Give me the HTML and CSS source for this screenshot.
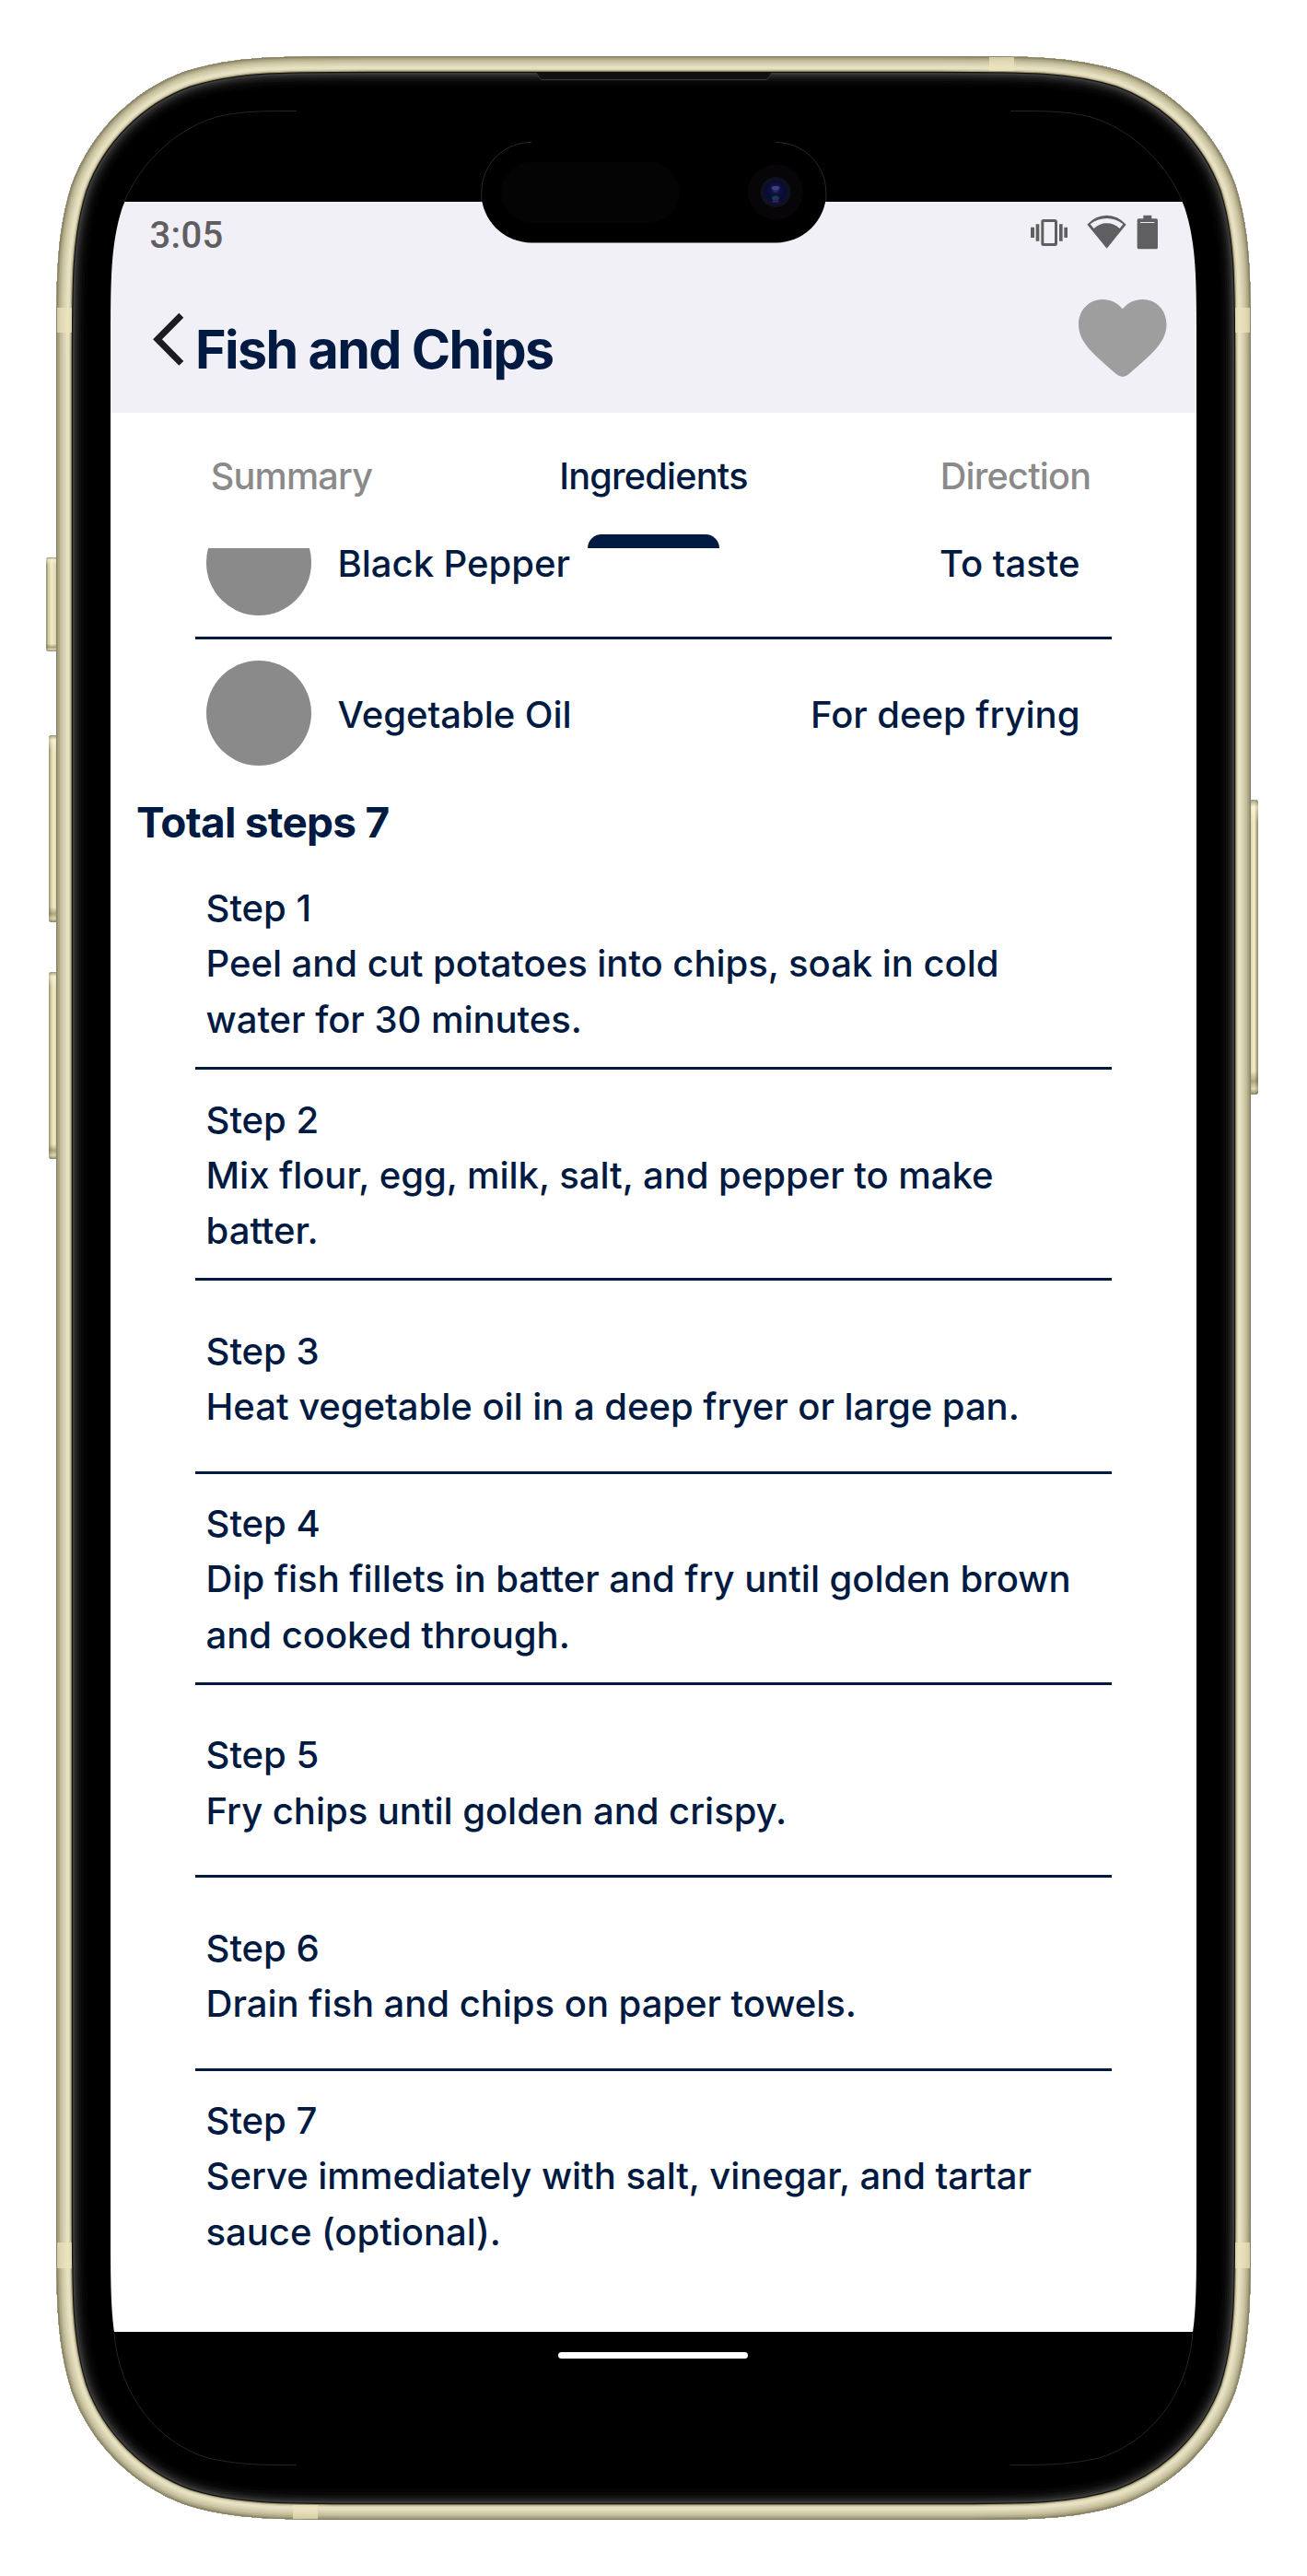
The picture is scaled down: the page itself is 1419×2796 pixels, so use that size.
FILE: index.html
```html
<!DOCTYPE html>
<html lang="en">
<head>
<meta charset="utf-8">
<title>Fish and Chips</title>
<link rel="stylesheet" href="styles.css">
</head>
<body>
<main class="stage">
  <svg class="frame" viewBox="0 0 1419 2796" aria-hidden="true">
    <defs>
      <linearGradient id="btnL" x1="0" x2="1" y1="0" y2="0">
        <stop offset="0" stop-color="#8f8865"/><stop offset=".18" stop-color="#cfc8a0"/><stop offset=".42" stop-color="#f1ebc9"/><stop offset=".8" stop-color="#dad4ae"/><stop offset="1" stop-color="#968f6c"/>
      </linearGradient>
      <linearGradient id="btnR" x1="1" x2="0" y1="0" y2="0">
        <stop offset="0" stop-color="#8f8865"/><stop offset=".15" stop-color="#b5ae88"/><stop offset=".35" stop-color="#f6f0cd"/><stop offset=".7" stop-color="#dad4ae"/><stop offset="1" stop-color="#a69f7c"/>
      </linearGradient>
      <linearGradient id="btnShade" x1="0" x2="0" y1="0" y2="1">
        <stop offset="0" stop-color="#7d7654" stop-opacity=".7"/><stop offset=".025" stop-color="#fffbe0" stop-opacity=".5"/><stop offset=".08" stop-color="#fffbe0" stop-opacity="0"/><stop offset=".92" stop-color="#6d6645" stop-opacity="0"/><stop offset=".955" stop-color="#6d6645" stop-opacity=".5"/><stop offset=".98" stop-color="#cfc8a0" stop-opacity=".5"/><stop offset="1" stop-color="#5d5636" stop-opacity=".7"/>
      </linearGradient>
      <path id="shell" d="M0 339.4C0 241.6 0 192.8 16.6 140.2C37.5 82.8 82.8 37.5 140.2 16.6C192.8 0 241.6 0 339.4 0H957.6C1055.4 0 1104.2 0 1156.8 16.6C1214.2 37.5 1259.5 82.8 1280.4 140.2C1297 192.8 1297 241.6 1297 339.4V2334.6C1297 2432.4 1297 2481.2 1280.4 2533.8C1259.5 2591.2 1214.2 2636.5 1156.8 2657.4C1104.2 2674 1055.4 2674 957.6 2674H339.4C241.6 2674 192.8 2674 140.2 2657.4C82.8 2636.5 37.5 2591.2 16.6 2533.8C0 2481.2 0 2432.4 0 2334.6Z"/>
      <clipPath id="shellClip"><use href="#shell"/></clipPath>
    </defs>
    <g>
      <rect x="50" y="605" width="14" height="102" rx="3" fill="url(#btnL)"/>
      <rect x="50" y="605" width="14" height="102" rx="3" fill="url(#btnShade)"/>
      <rect x="53" y="798" width="12" height="203" rx="3" fill="url(#btnL)"/>
      <rect x="53" y="798" width="12" height="203" rx="3" fill="url(#btnShade)"/>
      <rect x="53" y="1055" width="12" height="203" rx="3" fill="url(#btnL)"/>
      <rect x="53" y="1055" width="12" height="203" rx="3" fill="url(#btnShade)"/>
      <rect x="1354" y="868" width="12" height="320" rx="3" fill="url(#btnR)"/>
      <rect x="1354" y="868" width="12" height="320" rx="3" fill="url(#btnShade)"/>
    </g>
    <g transform="translate(61 61)">
      <use href="#shell"/>
      <g clip-path="url(#shellClip)" fill="none">
        <use href="#shell" stroke="#030303" stroke-width="66"/>
        <use href="#shell" stroke="#080808" stroke-width="60"/>
        <use href="#shell" stroke="#0f0f0f" stroke-width="54"/>
        <use href="#shell" stroke="#171717" stroke-width="50"/>
        <use href="#shell" stroke="#222" stroke-width="46"/>
        <use href="#shell" stroke="#2e2e2e" stroke-width="42"/>
        <use href="#shell" stroke="#3c3c3c" stroke-width="39"/>
        <use href="#shell" stroke="#15130f" stroke-width="36"/>
        <use href="#shell" stroke="#a39c7a" stroke-width="33.500"/>
        <use href="#shell" stroke="#d6cfad" stroke-width="31"/>
        <use href="#shell" stroke="#e7e1c3" stroke-width="28"/>
        <use href="#shell" stroke="#e1dabb" stroke-width="22"/>
        <use href="#shell" stroke="#d9d2b0" stroke-width="19"/>
        <use href="#shell" stroke="#cdc6a4" stroke-width="15"/>
        <use href="#shell" stroke="#c1ba98" stroke-width="11"/>
        <use href="#shell" stroke="#b1aa88" stroke-width="8"/>
        <use href="#shell" stroke="#9c9677" stroke-width="4.500"/>
        <use href="#shell" stroke="#858063" stroke-width="2"/>
        <g fill="#ebe4bc" fill-opacity=".7">
          <path d="M1 273h16v27H1zM1280 273h16v27h-16zM1 2373h16v28H1zM1280 2373h16v28h-16zM1013 1h27v15h-27zM257 2658h27v15h-27z"/>
        </g>
      </g>
    </g>
    <path d="M582 79h256l-5 7q-1 1-3 1H590q-2 0-3-1z" fill="#111"/>
    <path d="M582 79l4 6q1 1.500 3 1.500H831q2 0 3-1.500l4-6" fill="none" stroke="#3c3c3c"/>
  </svg>

  <section class="screen">
    <header class="header">
      <div class="status">
        <span class="clock">3:05</span>
        <svg class="status-icons" viewBox="650 578 430 120" fill="#5f5f61">
          <path d="M656 622h12v34h-12zM673 612h11v55h-11zM749 612h11v55h-11zM765 622h11v34h-11z"/>
          <rect x="694.500" y="600.500" width="44" height="78" rx="3" fill="none" stroke="#5f5f61" stroke-width="9"/>
          <path fill-rule="evenodd" d="M904 691L840 613Q867 583 904 583Q940 583 967 613ZM850 612L862 626Q880 609 904 609Q928 609 946 626L957 612Q932 593 904 593Q875 593 850 612Z"/>
          <path fill-rule="evenodd" d="M1023 583h27v11h15q5 0 5 5v89q0 5-5 5h-57q-5 0-5-5v-89q0-5 5-5h15zM1013 605v3h46v-3z"/>
        </svg>
      </div>
      <div class="appbar">
        <svg class="back" viewBox="0 0 36 60"><path d="M32.800 4.200L7 30.300L32.800 56.400" fill="none" stroke="#1c1b1f" stroke-width="7"/></svg>
        <h1 class="title">Fish and Chips</h1>
        <svg class="heart" viewBox="0 0 96 85"><path fill="#9e9e9e" d="M47.800 10.300C42 3.500 34.500 0 26 0C11 0 0 12 0 27C0 47 17 60 41 81Q47.800 87 54.500 81C78.500 60 95.500 47 95.500 27C95.500 12 84.500 0 69.500 0C61 0 53.500 3.500 47.800 10.300Z"/></svg>
      </div>
    </header>

    <nav class="tabs">
      <span class="tab">Summary</span>
      <span class="tab tab-active">Ingredients</span>
      <span class="tab">Direction</span>
    </nav>

    <div class="content">
      <ul class="ingredients">
        <li class="ingredient"><i class="dot"></i><span class="name">Black Pepper</span><span>To taste</span></li>
        <li class="ingredient"><i class="dot"></i><span class="name">Vegetable Oil</span><span>For deep frying</span></li>
      </ul>
      <h2 class="total">Total steps 7</h2>
      <ol class="steps">
        <li class="step"><p>Step 1</p><p>Peel and cut potatoes into chips, soak in cold<br>water for 30 minutes.</p></li>
        <li class="step"><p>Step 2</p><p>Mix flour, egg, milk, salt, and pepper to make<br>batter.</p></li>
        <li class="step step-short"><p>Step 3</p><p>Heat vegetable oil in a deep fryer or large pan.</p></li>
        <li class="step"><p>Step 4</p><p>Dip fish fillets in batter and fry until golden brown<br>and cooked through.</p></li>
        <li class="step step-short"><p>Step 5</p><p>Fry chips until golden and crispy.</p></li>
        <li class="step step-short"><p>Step 6</p><p>Drain fish and chips on paper towels.</p></li>
        <li class="step"><p>Step 7</p><p>Serve immediately with salt, vinegar, and tartar<br>sauce (optional).</p></li>
      </ol>
    </div>

    <footer class="gesture"><span class="pill"></span></footer>
  </section>

  <svg class="overlay" viewBox="0 0 1419 2796" aria-hidden="true">
    <defs>
      <radialGradient id="lens" cx=".5" cy=".4" r=".6">
        <stop offset="0" stop-color="#343a78"/><stop offset=".3" stop-color="#10123e"/><stop offset=".75" stop-color="#080a30"/><stop offset="1" stop-color="#0b1048"/>
      </radialGradient>
    </defs>
    <g fill="none" stroke="#484848" stroke-width=".5">
      <path d="M135 219C152 178 190 140 235 127C262 120 290 120.500 322 120.500"/>
      <path d="M1284 219C1267 178 1229 140 1184 127C1157 120 1129 120.500 1097 120.500"/>
      <path d="M124 2532C129 2600 172 2652 226 2668C262 2676 290 2675.500 322 2675.500"/>
      <path d="M1295 2532C1290 2600 1247 2652 1193 2668C1157 2676 1129 2675.500 1097 2675.500"/>
    </g>
    <rect x="522.500" y="154.500" width="374.500" height="109" rx="54.500"/>
    <path d="M522.800 219V209C522.800 178 547 154.500 577 154.500M896.800 219V209C896.800 178 872 154.500 842 154.500" fill="none" stroke="#555" stroke-width=".5"/>
    <rect x="544" y="176" width="194" height="65.500" rx="32.700" fill="#040404"/>
    <circle cx="842" cy="208.500" r="30" fill="#070508"/>
    <circle cx="842" cy="208.500" r="16.500" fill="#10111f"/>
    <circle cx="842" cy="208.500" r="12.500" fill="url(#lens)"/>
    <ellipse cx="842" cy="204" rx="4.500" ry="2.200" fill="#3c4280"/>
    <ellipse cx="842" cy="215" rx="4" ry="2.500" fill="#123f4c"/>
    <ellipse cx="842" cy="218.500" rx="4" ry="1.300" fill="#47196a"/>
  </svg>
</main>
</body>
</html>
```
FILE: styles.css
```css
* { box-sizing: border-box; margin: 0; padding: 0; }
body { background: #fff; font-family: Inter, "Liberation Sans", sans-serif; color: #001a41; }
ul, ol { list-style: none; }
.stage { position: relative; width: 1419px; height: 2796px; padding: 120px; overflow: hidden; }
.frame, .overlay { position: absolute; inset: 0; width: 1419px; height: 2796px; }
.screen {
  position: relative;
  display: flex;
  flex-direction: column;
  width: 1179px;
  height: 2556px;
  padding-top: 99px;
  background: #000;
  clip-path: path("M0 256.8C0 182.9 0 145.9 12.6 106.100C28.400 62.600 62.600 28.400 106.100 12.600C145.900 0 182.900 0 256.800 0H922.200C996.100 0 1033.100 0 1072.900 12.600C1116.400 28.400 1150.600 62.600 1166.400 106.100C1179 145.900 1179 182.900 1179 256.800V2299.200C1179 2373.100 1179 2410.100 1166.400 2449.900C1150.600 2493.400 1116.400 2527.600 1072.900 2543.400C1033.100 2556 996.100 2556 922.200 2556H256.800C182.900 2556 145.900 2556 106.100 2543.400C62.600 2527.600 28.400 2493.400 12.600 2449.900C0 2410.100 0 2373.100 0 2299.200Z");
}
.header { flex: none; height: 229px; background: #f2f0f7; }
.status { display: flex; align-items: flex-start; justify-content: space-between; height: 90px; padding: 13px 39px 0 42.500px; }
.clock { font: 500 40px/48px Roboto, sans-serif; letter-spacing: .3px; color: #5f5f61; }
.status-icons { width: 143.300px; height: 40px; }
.appbar { display: flex; align-items: flex-start; height: 139px; padding: 16px 32px 0 44px; }
.back { width: 36px; height: 60px; margin-top: 13px; }
.title { flex: 1; margin: 14px 0 0 12px; font-size: 57.300px; line-height: 80px; font-weight: 700; letter-spacing: -1.600px; }
.heart { width: 96px; height: 85px; }
.tabs { flex: none; display: grid; grid-template-columns: repeat(3, 1fr); height: 146.500px; background: #fff; }
.tab { display: flex; flex-direction: column; align-items: center; justify-content: space-between; padding-top: 39px; font-size: 39.600px; line-height: 60px; font-weight: 450; letter-spacing: -.750px; color: #8a8a8a; }
.tab-active { color: #001a41; }
.tab-active::after { content: ""; width: 143px; height: 15px; border-radius: 15px 15px 0 0; background: #001a41; }
.content { flex: 1; overflow: hidden; background: #fff; font-size: 40.100px; font-weight: 500; letter-spacing: -.060px; }
.ingredients { margin: -64.200px 92.400px 0; }
.ingredient { display: flex; align-items: center; height: 160.500px; padding: 0 34.200px 0 11.200px; }
.ingredient + .ingredient { height: 163.400px; border-top: 3px solid #001a41; }
.ingredient span { padding-top: 2px; }
.dot { width: 114.400px; height: 114.400px; margin-right: 28.600px; border-radius: 50%; background: #8a8a8a; }
.name { flex: 1; }
.total { padding-left: 28px; font-size: 45.900px; line-height: 77.400px; font-weight: 700; letter-spacing: -.720px; }
.steps { margin: 0 92.400px; }
.step { display: flex; flex-direction: column; justify-content: center; min-height: 209.300px; padding: 24.600px 11.200px 21.200px; line-height: 60.200px; border-bottom: 3px solid #001a41; }
.step-short { padding-top: 29px; line-height: 60.800px; }
.step:last-child { border-bottom: 0; }
.gesture { flex: none; display: flex; justify-content: center; height: 145px; padding: 22px 1px 0 0; }
.pill { width: 206px; height: 7px; border-radius: 4px; background: #fff; }
```
